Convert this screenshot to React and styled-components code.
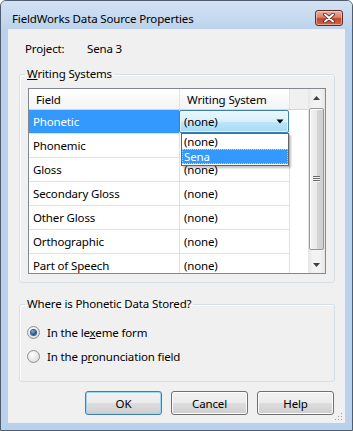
import React from 'react';
import styled, { createGlobalStyle } from 'styled-components';

const GlobalStyle = createGlobalStyle`
  html, body {
    margin: 0;
    padding: 0;
    background: #ffffff;
  }
  body {
    font-family: 'Segoe UI', 'Noto Sans', sans-serif;
    font-size: 11.5px;
    letter-spacing: -0.15px;
    color: #000;
  }
  * {
    box-sizing: border-box;
  }
`;

//Window frame
const Window = styled.div`
  width: 353px;
  height: 431px;
  display: flex;
  flex-direction: column;
  background: #b9d1ea;
  border: 1px solid #4e5d70;
  border-radius: 6px 6px 0 0;
  overflow: hidden;
`;

const TitleBar = styled.div`
  height: 28px;
  flex: none;
  display: flex;
  align-items: flex-start;
  justify-content: space-between;
  padding: 0 9px 0 11px;
  background: linear-gradient(#d3e2f3, #bdd3eb);
`;

const Title = styled.span`
  font-size: 11.5px;
  line-height: 16px;
  margin-top: 10px;
`;

const CloseButton = styled.div`
  width: 28px;
  height: 16px;
  margin-top: 9px;
  border: 1px solid #5e2a2a;
  border-radius: 3px;
  display: flex;
  align-items: center;
  justify-content: center;
  background: linear-gradient(#eab0a2 0%, #d98068 45%, #c2452a 55%, #d0654a 100%);
  box-shadow: inset 0 0 0 1px rgba(255, 220, 210, 0.55);
`;

const Client = styled.div`
  flex: 1;
  margin: 0 7px 7px 7px;
  background: #f0f0f0;
  display: flex;
  flex-direction: column;
  position: relative;
`;

const ProjectRow = styled.div`
  display: flex;
  line-height: 16px;
  margin: 12px 0 0 17px;
`;

const ProjectLabel = styled.span`
  width: 62px;
`;

//Group boxes
const GroupBox = styled.fieldset`
  margin: ${p => p.$top}px 10px 0 11px;
  padding: ${p => p.$pad};
  border: 1px solid #d5dfe5;
  border-radius: 3px;
  min-width: 0;
  box-shadow: inset 1px 1px 0 #fff;
`;

const Legend = styled.legend`
  padding: 0 2px;
  margin-left: ${p => p.$shift}px;
  line-height: 16px;
`;

//Grid
const GridFrame = styled.div`
  height: 186px;
  border: 1px solid #828790;
  background: #fff;
  display: flex;
  position: relative;
  overflow: hidden;
`;

const Table = styled.div`
  flex: 1;
  display: flex;
  flex-direction: column;
`;

const HeaderRow = styled.div`
  height: 21px;
  flex: none;
  display: flex;
  background: linear-gradient(#ffffff, #f3f4f6);
  border-bottom: 1px solid #d5d5d5;
`;

const HeaderCell = styled.div`
  width: ${p => p.$w}px;
  flex: ${p => (p.$w ? 'none' : '1')};
  padding-left: 7px;
  line-height: 21px;
  border-right: ${p => (p.$w ? '1px solid #e2e3e5' : 'none')};
  background: ${p => (p.$w ? 'transparent' : '#f0f0f0')};
`;

const Row = styled.div`
  height: 24px;
  flex: none;
  display: flex;
`;

const Cell = styled.div`
  width: ${p => p.$w}px;
  flex: none;
  padding-left: 4px;
  line-height: 23px;
  border-right: 1px solid #e4e4c9;
  border-bottom: 1px solid #e4e4c9;
  white-space: nowrap;
  background: ${p => (p.$selected ? '#3399ff' : '#fff')};
  color: ${p => (p.$selected ? '#fff' : '#000')};
`;

const Filler = styled.div`
  flex: 1;
`;

const Combo = styled.div`
  width: 110px;
  flex: none;
  height: 23px;
  margin-left: -1px;
  border: 1px solid #3c7fb1;
  border-radius: 2px;
  display: flex;
  align-items: center;
  justify-content: space-between;
  padding: 0 4px 0 4px;
  background: linear-gradient(#eaf6fd 0%, #d9f0fc 50%, #bee6fd 51%, #a7d9f5 100%);
  box-shadow: inset 0 0 0 1px rgba(255, 255, 255, 0.6);
`;

const DropList = styled.div`
  position: absolute;
  left: 152px;
  top: 44px;
  width: 108px;
  height: 33px;
  border: 1px solid #646464;
  background: #fff;
  box-shadow: 2px 2px 2px rgba(0, 0, 0, 0.25);
  padding: 0;
`;

const DropItem = styled.div`
  height: 15px;
  line-height: 15px;
  padding-left: 2px;
  background: ${p => (p.$active ? '#3399ff' : '#fff')};
  color: ${p => (p.$active ? '#fff' : '#000')};
  outline: ${p => (p.$active ? '1px dotted #a8d2ff' : 'none')};
  outline-offset: -1px;
`;

//Scrollbar
const ScrollBar = styled.div`
  width: 17px;
  flex: none;
  display: flex;
  flex-direction: column;
  align-items: center;
  background: linear-gradient(90deg, #e6e6e6, #f3f3f3 30%, #f3f3f3 70%, #e6e6e6);
`;

const ArrowBox = styled.div`
  height: 17px;
  width: 17px;
  flex: none;
  display: flex;
  align-items: center;
  justify-content: center;
`;

const Thumb = styled.div`
  width: 15px;
  height: 142px;
  margin-top: 2px;
  border: 1px solid #979797;
  border-radius: 2px;
  background: linear-gradient(90deg, #f4f4f4, #e9e9e9 50%, #d6d6d6 51%, #cfcfcf);
  box-shadow: inset 1px 1px 0 #fff;
  display: flex;
  align-items: center;
  justify-content: center;
`;

const Grip = styled.div`
  width: 7px;
  height: 6px;
  background: repeating-linear-gradient(#6d6d6d 0 1px, #f4f4f4 1px 2px);
`;

//Radio
const RadioRow = styled.label`
  display: flex;
  align-items: center;
  height: 24px;
`;

const RadioDot = styled.span`
  width: 13px;
  height: 13px;
  border-radius: 50%;
  border: 1px solid #8e8f8f;
  background: radial-gradient(circle at 40% 35%, #ffffff, #e0e0e0 70%, #cfcfcf);
  margin-right: 7px;
  display: flex;
  align-items: center;
  justify-content: center;
  &::after {
    content: '';
    width: 5px;
    height: 5px;
    border-radius: 50%;
    display: ${p => (p.$checked ? 'block' : 'none')};
    background: radial-gradient(circle at 40% 35%, #7fb8e6, #1d4f86 60%, #12305a);
    box-shadow: 0 0 0 1px #2f5e8f;
  }
`;

//Buttons
const ButtonBar = styled.div`
  display: flex;
  justify-content: flex-end;
  gap: 9px;
  margin: 9px 11px 0 0;
`;

const Button = styled.div`
  width: 77px;
  height: 24px;
  border: 1px solid ${p => (p.$default ? '#3c7fb1' : '#707070')};
  border-radius: 3px;
  display: flex;
  align-items: center;
  justify-content: center;
  background: linear-gradient(#f2f2f2 0%, #ebebeb 50%, #dddddd 51%, #cfcfcf 100%);
  box-shadow: inset 0 0 0 1px ${p => (p.$default ? '#9ad6f5' : '#fcfcfc')};
`;

const SizeGrip = styled.svg`
  position: absolute;
  right: 2px;
  bottom: 2px;
`;

const fields = [
  'Phonetic',
  'Phonemic',
  'Gloss',
  'Secondary Gloss',
  'Other Gloss',
  'Orthographic',
  'Part of Speech',
];

const App = () => {
  return (
    <>
      <GlobalStyle />
      <Window>
        <TitleBar>
          <Title>FieldWorks Data Source Properties</Title>
          <CloseButton>
            <svg width='12' height='10' viewBox='0 0 12 10'>
              <path d='M2 1.5 L10 8.5 M10 1.5 L2 8.5' stroke='#4a2020' strokeWidth='3.6' strokeLinecap='round' />
              <path d='M2 1.5 L10 8.5 M10 1.5 L2 8.5' stroke='#ffffff' strokeWidth='2' strokeLinecap='round' />
            </svg>
          </CloseButton>
        </TitleBar>
        <Client>
          <ProjectRow>
            <ProjectLabel>Project:</ProjectLabel>
            <span>Sena 3</span>
          </ProjectRow>

          <GroupBox $top={9} $pad='6px 8px 8px 8px'>
            <Legend $shift={-3}>
              <u>W</u>riting Systems
            </Legend>
            <GridFrame>
              <Table>
                <HeaderRow>
                  <HeaderCell $w={151}>Field</HeaderCell>
                  <HeaderCell $w={110}>Writing System</HeaderCell>
                  <HeaderCell />
                </HeaderRow>
                {fields.map((name, i) => (
                  <Row key={name}>
                    <Cell $w={151} $selected={i === 0}>
                      {name}
                    </Cell>
                    {i === 0 ? (
                      <Combo>
                        <span>(none)</span>
                        <svg width='8' height='5' viewBox='0 0 8 5'>
                          <path d='M0.5 0.5 H7.5 L4 4.5 Z' fill='#000' />
                        </svg>
                      </Combo>
                    ) : (
                      <Cell $w={110}>(none)</Cell>
                    )}
                    <Filler />
                  </Row>
                ))}
              </Table>
              <ScrollBar>
                <ArrowBox>
                  <svg width='7' height='4' viewBox='0 0 7 4'>
                    <path d='M3.5 0 L7 4 H0 Z' fill='#404040' />
                  </svg>
                </ArrowBox>
                <Thumb>
                  <Grip />
                </Thumb>
                <Filler />
                <ArrowBox>
                  <svg width='7' height='4' viewBox='0 0 7 4'>
                    <path d='M0 0 H7 L3.5 4 Z' fill='#404040' />
                  </svg>
                </ArrowBox>
              </ScrollBar>
              <DropList>
                <DropItem>(none)</DropItem>
                <DropItem $active>Sena</DropItem>
              </DropList>
            </GridFrame>
          </GroupBox>

          <GroupBox $top={13} $pad='8px 8px 13px 7px'>
            <Legend $shift={-2}>Where is Phonetic Data Stored?</Legend>
            <RadioRow>
              <RadioDot $checked />
              <span>
                In the le<u>x</u>eme form
              </span>
            </RadioRow>
            <RadioRow>
              <RadioDot />
              <span>
                In the p<u>r</u>onunciation field
              </span>
            </RadioRow>
          </GroupBox>

          <ButtonBar>
            <Button $default>OK</Button>
            <Button>Cancel</Button>
            <Button>Help</Button>
          </ButtonBar>

          <SizeGrip width='8' height='8' viewBox='0 0 8 8'>
            <rect x='6' y='0' width='1' height='1' fill='#a0a0a0' />
            <rect x='3' y='3' width='1' height='1' fill='#a0a0a0' />
            <rect x='6' y='3' width='1' height='1' fill='#a0a0a0' />
            <rect x='0' y='6' width='1' height='1' fill='#a0a0a0' />
            <rect x='3' y='6' width='1' height='1' fill='#a0a0a0' />
            <rect x='6' y='6' width='1' height='1' fill='#a0a0a0' />
          </SizeGrip>
        </Client>
      </Window>
    </>
  );
};

export default App;
